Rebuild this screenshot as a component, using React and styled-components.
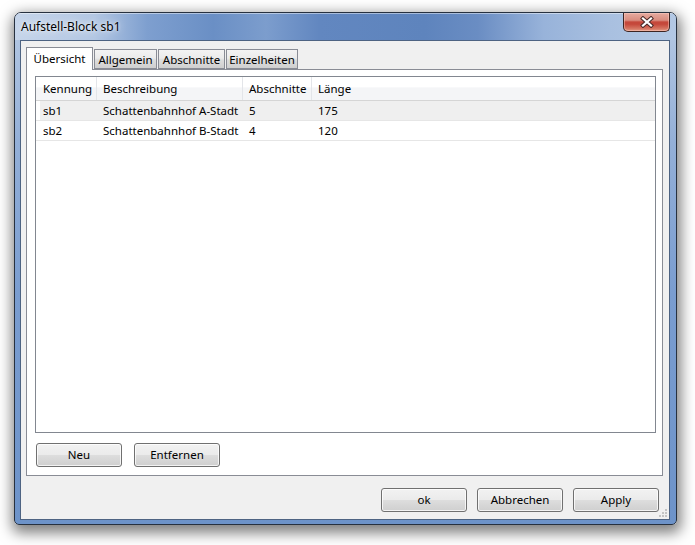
import React from "react";
import styled, { createGlobalStyle } from "styled-components";

const Global = createGlobalStyle`
  html, body { margin: 0; padding: 0; background: #ffffff; }
  html { height: 100%; }
  body { min-height: 100%; }
  * { box-sizing: border-box; }
  body { font-family: "Noto Sans", "Open Sans", sans-serif; font-size: 11.5px; color: #000; }
`;

const Page = styled.div`
  width: 695px;
  height: 545px;
  padding: 12px 0 0 14px;
`;

const Window = styled.div`
  position: relative;
  width: 663px;
  height: 513px;
  border: 1px solid #27313f;
  border-radius: 7px 7px 5px 5px;
  background: linear-gradient(180deg, #b7cae4 0%, #94b0d8 25%, #7a9dd0 55%, #6d93c9 100%);
  box-shadow: 1px 5px 14px 3px rgba(0, 0, 0, 0.5);
  display: flex;
  flex-direction: column;
  overflow: hidden;
`;

const TitleBar = styled.div`
  height: 27px;
  flex: none;
  display: flex;
  align-items: flex-start;
  justify-content: space-between;
  padding-left: 6px;
  background: linear-gradient(
    90deg,
    #c6d5ea 0%,
    #b3c7e3 12%,
    #7e9fcf 20%,
    #6a8fc5 30%,
    #7c9dcd 38%,
    #6287c0 46%,
    #5e84bd 62%,
    #6a8dc3 70%,
    #98b3da 80%,
    #a9c0e0 90%,
    #b3c8e4 100%
  );
  box-shadow: inset 0 1px 0 rgba(255, 255, 255, 0.45);
`;

const Title = styled.span`
  font-size: 12px;
  line-height: 27px;
  color: #000;
  text-shadow: 0 0 8px rgba(255, 255, 255, 0.95), 0 0 3px rgba(255, 255, 255, 0.8);
`;

const CloseButton = styled.div`
  width: 47px;
  height: 19px;
  margin-right: 6px;
  border: 1px solid #3d2422;
  border-top: none;
  border-radius: 0 0 5px 5px;
  background: linear-gradient(
    180deg,
    #e6aba0 0%,
    #d98d80 40%,
    #c5483b 50%,
    #c5483b 62%,
    #d4725f 85%,
    #e29a85 100%
  );
  box-shadow: inset 0 0 0 1px rgba(255, 210, 200, 0.45);
  display: flex;
  align-items: center;
  justify-content: center;
`;

const Body = styled.div`
  flex: 1;
  padding: 0 6px 4px 5px;
  display: flex;
`;

const Client = styled.div`
  position: relative;
  flex: 1;
  border: 1px solid #4d6382;
  background: #f0f0f0;
  padding: 6px 6px 0 5px;
  display: flex;
  flex-direction: column;
`;

const TabStrip = styled.div`
  display: flex;
  align-items: flex-end;
  gap: 1px;
  height: 22px;
  position: relative;
  z-index: 1;
`;

const Tab = styled.div`
  width: ${(p) => p.$w}px;
  height: ${(p) => (p.$active ? 23 : 20)}px;
  margin-bottom: ${(p) => (p.$active ? -1 : 0)}px;
  border: 1px solid #898c95;
  border-bottom: ${(p) => (p.$active ? "none" : "1px solid #898c95")};
  background: ${(p) =>
    p.$active
      ? "#ffffff"
      : "linear-gradient(180deg, #f3f3f3 0%, #ebebeb 45%, #dddddd 55%, #cfcfcf 100%)"};
  display: flex;
  align-items: ${(p) => (p.$active ? "flex-start" : "center")};
  padding-top: ${(p) => (p.$active ? 3 : 0)}px;
  justify-content: center;
  font-size: 11.5px;
  white-space: nowrap;
`;

const Panel = styled.div`
  height: 407px;
  border: 1px solid #898c95;
  background: #ffffff;
  padding: 6px 6px 8px 8px;
  display: flex;
  flex-direction: column;
`;

const Table = styled.div`
  height: 357px;
  border: 1px solid #828790;
  background: #fff;
  display: flex;
  flex-direction: column;
`;

const cols = "61px 146px 69px 1fr";

const HeaderRow = styled.div`
  display: grid;
  grid-template-columns: ${cols};
  height: 24px;
  border-bottom: 1px solid #d5d5d5;
  background: linear-gradient(180deg, #ffffff 0%, #ffffff 45%, #f4f5f7 46%, #f4f5f7 100%);
`;

const HeaderCell = styled.div`
  padding-left: ${(p) => p.$pl || 6}px;
  line-height: 24px;
  border-right: ${(p) => (p.$last ? "none" : "1px solid #e3e5e9")};
  white-space: nowrap;
  overflow: hidden;
`;

const Row = styled.div`
  display: grid;
  grid-template-columns: ${cols};
  height: 20px;
  border-bottom: 1px solid #e6e6e6;
  background: ${(p) =>
    p.$selected
      ? "linear-gradient(#efefef, #efefef) 4px 0 / calc(100% - 4px) 100% no-repeat"
      : "#ffffff"};
`;

const Cell = styled.div`
  padding-left: ${(p) => p.$pl || 6}px;
  line-height: 20px;
  white-space: nowrap;
  overflow: hidden;
`;

const ButtonRow = styled.div`
  display: flex;
  gap: 12px;
  margin: 10px 0 0 1px;
`;

const DialogButtons = styled.div`
  display: flex;
  gap: 10px;
  justify-content: flex-end;
  margin-top: 12px;
  padding-right: 4px;
`;

const Button = styled.button`
  width: 86px;
  height: 24px;
  padding: 0;
  border: 1px solid #707070;
  border-radius: 3px;
  background: linear-gradient(180deg, #f2f2f2 0%, #ebebeb 48%, #dddddd 52%, #cfcfcf 100%);
  box-shadow: inset 0 0 0 1px rgba(255, 255, 255, 0.75);
  font-family: inherit;
  font-size: 11.5px;
  color: #000;
  line-height: 20px;
`;

const Grip = styled.svg`
  position: absolute;
  right: 1px;
  bottom: 1px;
`;

const rows = [
  { k: "sb1", b: "Schattenbahnhof A-Stadt", a: "5", l: "175", sel: true },
  { k: "sb2", b: "Schattenbahnhof B-Stadt", a: "4", l: "120" },
];

export default function App() {
  return (
    <Page>
      <Global />
      <Window>
        <TitleBar>
          <Title>Aufstell-Block sb1</Title>
          <CloseButton>
            <svg width="14" height="12" viewBox="0 0 14 12">
              <path d="M3 2.5 L11 9.5 M11 2.5 L3 9.5" stroke="#4a2a28" strokeWidth="4.2" strokeLinecap="square" />
              <path d="M3 2.5 L11 9.5 M11 2.5 L3 9.5" stroke="#ffffff" strokeWidth="2.2" strokeLinecap="square" />
            </svg>
          </CloseButton>
        </TitleBar>
        <Body>
          <Client>
            <TabStrip>
              <Tab $active $w={67}>Übersicht</Tab>
              <Tab $w={63}>Allgemein</Tab>
              <Tab $w={67}>Abschnitte</Tab>
              <Tab $w={72}>Einzelheiten</Tab>
            </TabStrip>
            <Panel>
              <Table>
                <HeaderRow>
                  <HeaderCell $pl={7}>Kennung</HeaderCell>
                  <HeaderCell>Beschreibung</HeaderCell>
                  <HeaderCell>Abschnitte</HeaderCell>
                  <HeaderCell $last>Länge</HeaderCell>
                </HeaderRow>
                {rows.map((r) => (
                  <Row key={r.k} $selected={r.sel}>
                    <Cell $pl={7}>{r.k}</Cell>
                    <Cell>{r.b}</Cell>
                    <Cell>{r.a}</Cell>
                    <Cell>{r.l}</Cell>
                  </Row>
                ))}
              </Table>
              <ButtonRow>
                <Button>Neu</Button>
                <Button>Entfernen</Button>
              </ButtonRow>
            </Panel>
            <DialogButtons>
              <Button>ok</Button>
              <Button>Abbrechen</Button>
              <Button>Apply</Button>
            </DialogButtons>
            <Grip width="10" height="10" viewBox="0 0 10 10">
              {[
                [7, 1],
                [4, 4],
                [7, 4],
                [1, 7],
                [4, 7],
                [7, 7],
              ].map(([x, y]) => (
                <rect key={`${x}-${y}`} x={x} y={y} width="2" height="2" fill="#c4c4c4" />
              ))}
            </Grip>
          </Client>
        </Body>
      </Window>
    </Page>
  );
}
